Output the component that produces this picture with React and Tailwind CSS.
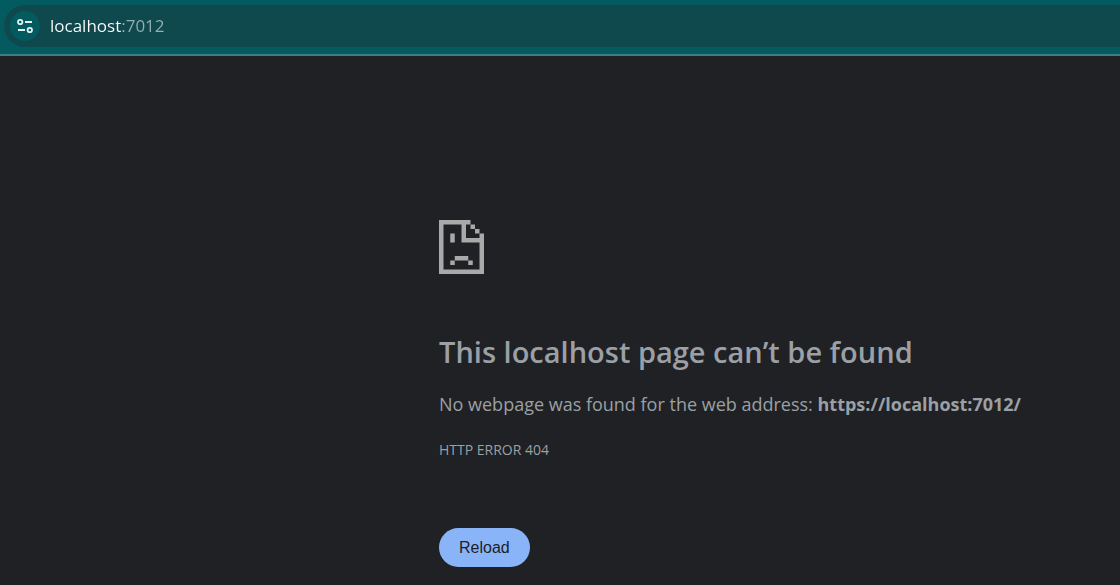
function SiteSettingsIcon() {
  return (
    <svg width="16" height="16" viewBox="0 0 16 16" fill="none" stroke="#e3f2f2" strokeWidth="1.8" aria-hidden="true">
      <circle cx="3.2" cy="4" r="2.2" />
      <path d="M8 4h7M1 12h7" />
      <circle cx="12.8" cy="12" r="2.2" />
    </svg>
  );
}

function SadPageIcon() {
  return (
    <svg width="45" height="54" viewBox="0 0 10 12" fill="#a9a9a9" aria-hidden="true">
      <path d="M0 0h7v1H6v3h3V3h1v9H0zM1 1v10h8V5H5V1z" />
      <path d="M7 1h1v1H7zM8 2h1v1H8zM2.5 3h1v2h-1zM3.5 8h3v1h-3zM2.5 9h1v1h-1zM6.5 9h1v1h-1z" />
    </svg>
  );
}

export default function App() {
  return (
    <div className="flex min-h-screen flex-col bg-[#202124] font-['Open_Sans',sans-serif] text-[#9aa0a6]">
      <header className="border-b-2 border-[#3f7f83] bg-[#035b60] pt-[5px] pb-[7px] pl-1">
        <div className="flex h-[42px] items-center gap-[10px] rounded-l-full bg-[#0f484d] pl-[6px]">
          <button type="button" aria-label="View site information" className="flex size-[30px] items-center justify-center rounded-full bg-[#035b60]">
            <SiteSettingsIcon />
          </button>
          <input
            type="text"
            aria-label="Address"
            defaultValue="localhost:7012"
            className="min-w-0 flex-1 bg-linear-to-r from-white from-[71px] to-[#94b1b4] to-[71px] bg-clip-text text-[17px] text-transparent caret-white outline-none"
          />
        </div>
      </header>
      <main className="flex flex-col items-start pt-[164px] pr-4 pb-[18px] pl-[439px]">
        <SadPageIcon />
        <h1 className="mt-[60px] text-[29px] leading-9 font-semibold whitespace-nowrap">This localhost page can’t be found</h1>
        <p className="mt-5 text-[18px] leading-7 whitespace-nowrap">
          No webpage was found for the web address: <strong className="font-bold">https://localhost:7012/</strong>
        </p>
        <p className="mt-5 text-[14px] leading-6">HTTP ERROR 404</p>
        <button type="button" className="mt-[66px] h-[39px] rounded-full bg-[#8ab4f8] px-5 font-['Liberation_Sans',sans-serif] text-[16px] text-[#202124]">
          Reload
        </button>
      </main>
    </div>
  );
}
